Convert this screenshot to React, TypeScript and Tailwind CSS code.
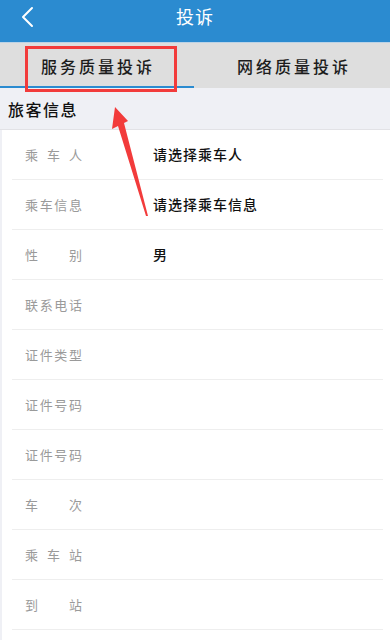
const rows: { label: string[]; value?: string }[] = [
  { label: ["乘", "车", "人"], value: "请选择乘车人" },
  { label: ["乘", "车", "信", "息"], value: "请选择乘车信息" },
  { label: ["性", "别"], value: "男" },
  { label: ["联", "系", "电", "话"] },
  { label: ["证", "件", "类", "型"] },
  { label: ["证", "件", "号", "码"] },
  { label: ["证", "件", "号", "码"] },
  { label: ["车", "次"] },
  { label: ["乘", "车", "站"] },
  { label: ["到", "站"] },
];

const font = { fontFamily: '"Noto Sans CJK SC", "Noto Sans", sans-serif' };

const App = () => {
  return (
    <div className="relative w-[390px] h-[640px] overflow-hidden bg-[#eff0f5] flex flex-col" style={font}>
      {/* header */}
      <div className="relative h-[42px] shrink-0 bg-[#2b8bd0] flex items-start justify-center pt-[3px]">
        <svg className="absolute left-[18px] top-[6px]" width="18" height="22" viewBox="0 0 18 22">
          <path d="M14 2 L5 11 L14 20" fill="none" stroke="white" strokeWidth="2" strokeLinecap="round" strokeLinejoin="round" />
        </svg>
        <span className="text-white text-[18px] leading-[26px] tracking-[1px]">投诉</span>
      </div>
      <div className="h-[1px] shrink-0 bg-[#bcd3e6]" />

      {/* tabs */}
      <div className="flex h-[45px] shrink-0 bg-[#dedede]">
        <div className="relative w-[194px] flex items-center justify-center">
          <span className="text-[16px] font-medium text-[#1c1c1c] tracking-[3px] pl-[2px]">服务质量投诉</span>
          <div className="absolute left-0 right-0 bottom-0 h-[2px] bg-[#2b8bd0]" />
        </div>
        <div className="flex-1 flex items-center justify-center">
          <span className="text-[16px] font-medium text-[#1c1c1c] tracking-[3px] pl-[4px]">网络质量投诉</span>
        </div>
      </div>

      {/* section title */}
      <div className="h-[42px] shrink-0 flex items-center pl-[8px] border-b border-[#e2e2e6]">
        <span className="text-[16px] font-medium text-[#111] tracking-[1.5px]">旅客信息</span>
      </div>

      {/* list */}
      <div className="flex-1 ml-[2px] bg-white">
        {rows.map((r, i) => (
          <div key={i} className="pl-[10px] pr-[7px]">
            <div className="h-[50px] flex items-center border-b border-[#eeeeee]">
              <div className="w-[57px] ml-[13px] flex justify-between text-[13px] text-[#9a9a9a]">
                {r.label.map((c, j) => (
                  <span key={j}>{c}</span>
                ))}
              </div>
              {r.value && (
                <span className="ml-[71px] text-[14px] font-medium text-[#111] tracking-[1px]">{r.value}</span>
              )}
            </div>
          </div>
        ))}
      </div>

      {/* annotation overlay */}
      <div className="absolute left-[25px] top-[46px] w-[152px] h-[46px] border-[3px] border-[#f23b3b]" />
      <svg className="absolute left-0 top-0" width="390" height="640" viewBox="0 0 390 640">
        <polygon
          points="115,107 128,121 124,123 148,216 146,216 118,126 112,129"
          fill="#f23b3b"
        />
      </svg>
    </div>
  );
};

export default App;
